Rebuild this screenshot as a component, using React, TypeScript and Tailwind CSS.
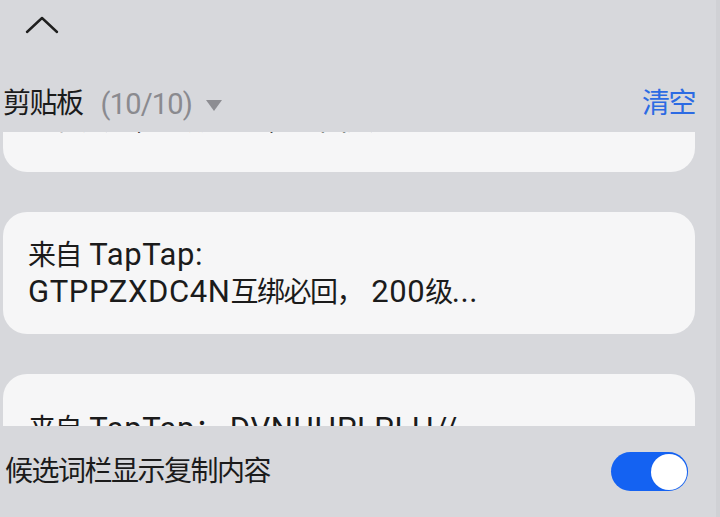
const font = "font-['Roboto','Noto_Sans_CJK_SC',sans-serif]";

type Clip = {
  id: number;
  lines: string[];
  pad: string;
};

const clips: Clip[] = [
  {
    id: 1,
    lines: ["来自 TapTap：KM8QZ2WXRT", "互相关注，长期在线，必回关"],
    pad: "pt-[24px] pb-[33px]",
  },
  {
    id: 2,
    lines: ["来自 TapTap:", "GTPPZXDC4N互绑必回， 200级..."],
    pad: "py-[24px]",
  },
  {
    id: 3,
    lines: ["来自 TapTap： DVNUHPLPLH//", "互绑必回，每天在线..."],
    pad: "pt-[36px] pb-[24px]",
  },
];

// latin runs sit a little larger than the CJK glyphs, like the system font does
function Mixed({ text }: { text: string }) {
  const parts = text.split(/([\x00-\x7F]+)/).filter(Boolean);
  return (
    <>
      {parts.map((p, i) =>
        /^[\x00-\x7F]+$/.test(p) ? (
          <span key={i} className="text-[31px] tracking-[0.6px]">
            {p}
          </span>
        ) : (
          <span key={i} className="text-[28px] tracking-[-1.5px]">
            {p}
          </span>
        ),
      )}
    </>
  );
}

function ChevronUp() {
  return (
    <svg width="34" height="20" viewBox="0 0 34 20" fill="none">
      <polyline
        points="2,17 17,3 32,17"
        stroke="#1f1f1f"
        strokeWidth="2.4"
        strokeLinecap="round"
        strokeLinejoin="round"
      />
    </svg>
  );
}

function Toggle({ on }: { on: boolean }) {
  return (
    <div
      className={`flex h-[39px] w-[77px] items-center rounded-full px-[1.5px] ${
        on ? "justify-end bg-[#1462f2]" : "justify-start bg-[#c4c5ca]"
      }`}
    >
      <span className="h-[36px] w-[36px] rounded-full bg-white shadow-[0_0_0_1px_rgba(20,98,242,0.35)]" />
    </div>
  );
}

export default function App() {
  return (
    <div
      className={`${font} flex h-[517px] w-[720px] flex-col overflow-hidden border-r-[4px] border-[#d0d1d5] bg-[#d7d8dc] pl-[3px] pr-[21px] text-[#1b1b1b]`}
    >
      {/* collapse handle */}
      <div className="flex h-[80px] items-start pl-[22px] pt-[15px]">
        <ChevronUp />
      </div>

      {/* title row */}
      <div className="flex h-[48px] items-center justify-between">
        <div className="flex items-center leading-none">
          <Mixed text="剪贴板" />
          <span className="ml-[18px] text-[29px] tracking-[-0.8px] text-[#8a8a8f]">(10/10)</span>
          <svg width="16" height="11" viewBox="0 0 16 11" className="ml-[14px] mt-[2px]">
            <polygon points="0,0 16,0 8,11" fill="#8d8d92" />
          </svg>
        </div>
        <span className="leading-none text-[#2c6be3]">
          <Mixed text="清空" />
        </span>
      </div>

      {/* clip list, scrolled */}
      <div className="mt-[4px] h-[294px] overflow-hidden">
        <div className="-mt-[91px] flex flex-col gap-[40px]">
          {clips.map((c) => (
            <div
              key={c.id}
              className={`rounded-[24px] bg-[#f6f6f7] px-[25px] leading-[37px] ${c.pad}`}
            >
              {c.lines.map((l, i) => (
                <div key={i} className="h-[37px] whitespace-pre">
                  <Mixed text={l} />
                </div>
              ))}
            </div>
          ))}
        </div>
      </div>

      {/* setting row */}
      <div className="flex flex-1 items-center justify-between pl-[2px] pr-[7px]">
        <span className="leading-none">
          <Mixed text="候选词栏显示复制内容" />
        </span>
        <Toggle on />
      </div>
    </div>
  );
}
